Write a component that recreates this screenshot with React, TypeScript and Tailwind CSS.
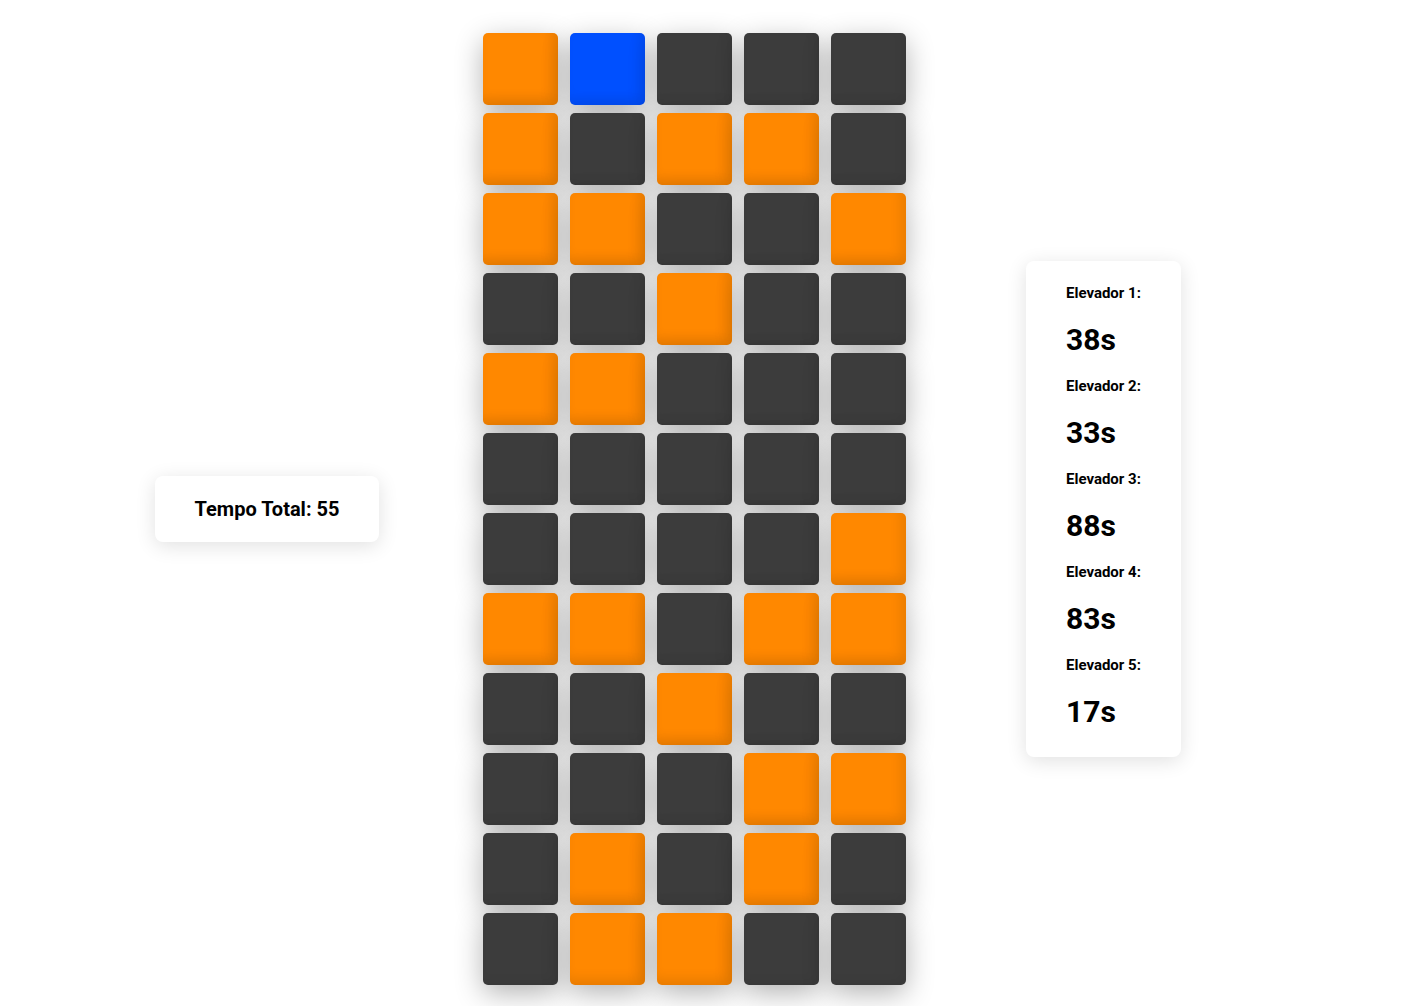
const grid = [
    "OBDDD",
    "ODOOD",
    "OODDO",
    "DDODD",
    "OODDD",
    "DDDDD",
    "DDDDO",
    "OODOO",
    "DDODD",
    "DDDOO",
    "DODOD",
    "DOODD",
];

const times = [38, 33, 88, 83, 17];

const Cell = ({ kind }: { kind: string }) => {
    if (kind === "O") {
        return <div className="w-[75px] h-[72px] rounded-[5px] bg-[#ff8800] shadow-[inset_-5px_-6px_12px_rgba(0,0,0,0.09),0_8px_28px_rgba(0,0,0,0.3)]" />;
    }
    if (kind === "B") {
        return <div className="w-[75px] h-[72px] rounded-[5px] bg-[#0050ff] shadow-[inset_-5px_-6px_12px_rgba(0,0,0,0.06),0_8px_28px_rgba(0,0,0,0.3)]" />;
    }
    return <div className="w-[75px] h-[72px] rounded-[5px] bg-[#3c3c3c] shadow-[inset_-4px_-4px_10px_rgba(0,0,0,0.05),0_8px_28px_rgba(0,0,0,0.3)]" />;
};

const App = () => {
    return (
        <div className="min-h-screen bg-white font-['Roboto',sans-serif] text-black flex items-center pl-[155px] py-[33px]">
            <div className="w-[224px] h-[66px] rounded-[8px] bg-white shadow-[0_4px_20px_rgba(0,0,0,0.12)] flex items-center justify-center">
                <h2 className="text-[20px] font-bold leading-none">Tempo Total: 55</h2>
            </div>

            <div className="ml-[104px] grid grid-cols-5 gap-x-[12px] gap-y-[8px]">
                {grid.map((row, r) =>
                    row.split("").map((kind, c) => <Cell key={r + "-" + c} kind={kind} />)
                )}
            </div>

            <div className="ml-[120px] w-[155px] h-[496px] rounded-[8px] bg-white shadow-[0_4px_20px_rgba(0,0,0,0.12)] pl-[40px] pt-[23px]">
                {times.map((t, i) => (
                    <div key={i} className="h-[93px]">
                        <p className="text-[15px] font-bold leading-[18px]">Elevador {i + 1}:</p>
                        <h1 className="mt-[21px] text-[30px] font-bold leading-[34px]">{t}s</h1>
                    </div>
                ))}
            </div>
        </div>
    );
};

export default App;
